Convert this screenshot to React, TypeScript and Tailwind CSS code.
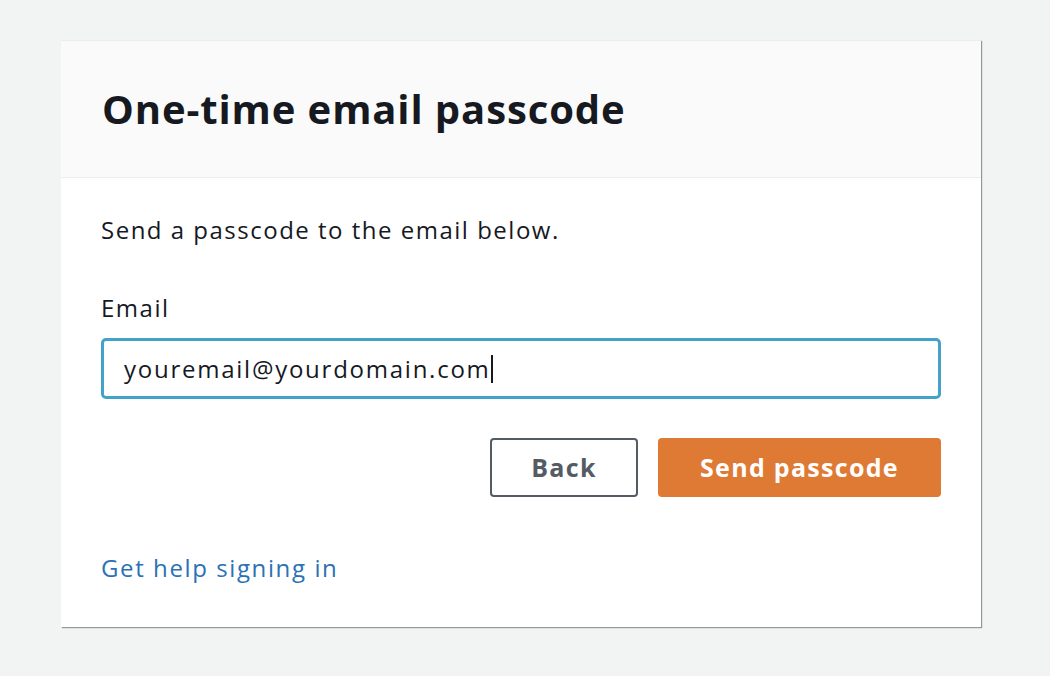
import React from "react";

export default function App() {
  return (
    <div className="w-[1050px] h-[676px] bg-[#f2f3f3] pt-[40px] pl-[61px]" style={{ fontFamily: '"Open Sans", "Noto Sans", sans-serif' }}>
      <div className="w-[920px] bg-white shadow-[1px_1px_1px_0_rgba(0,28,36,0.3),1px_1px_1px_0_rgba(0,28,36,0.15)] border-t border-[#eaeded]">
        <div className="h-[137px] bg-[#fafafa] border-b border-[#eaeded] pl-[41px] flex items-center">
          <h1 className="text-[40px] font-bold text-[#16191f] leading-none tracking-[0.9px]">One-time email passcode</h1>
        </div>
        <div className="px-[40px] pt-[37px] pb-[44px]">
          <p className="text-[24px] text-[#16191f] leading-[30px] tracking-[1.5px]">Send a passcode to the email below.</p>
          <label className="block mt-[48px] text-[24px] text-[#16191f] leading-[30px] tracking-[1.5px]">Email</label>
          <div className="mt-[15px] h-[61px] border-[3px] border-[#44a2c9] rounded-[5px] flex items-center pl-[20px]">
            <span className="text-[24px] text-[#16191f] tracking-[1.75px]">youremail@yourdomain.com</span>
            <span className="w-[2px] h-[28px] bg-[#16191f]" />
          </div>
          <div className="mt-[39px] flex justify-end gap-[20px]">
            <button className="w-[148px] h-[59px] border-2 border-[#545b64] rounded-[4px] text-[#545b64] font-bold text-[25px] tracking-[1.3px]">Back</button>
            <button className="w-[283px] h-[59px] bg-[#df7a34] rounded-[4px] text-white font-bold text-[25px] tracking-[1.3px]">Send passcode</button>
          </div>
          <a className="block mt-[56px] text-[24px] text-[#2a72b5] leading-[30px] tracking-[1.6px]">Get help signing in</a>
        </div>
      </div>
    </div>
  );
}
